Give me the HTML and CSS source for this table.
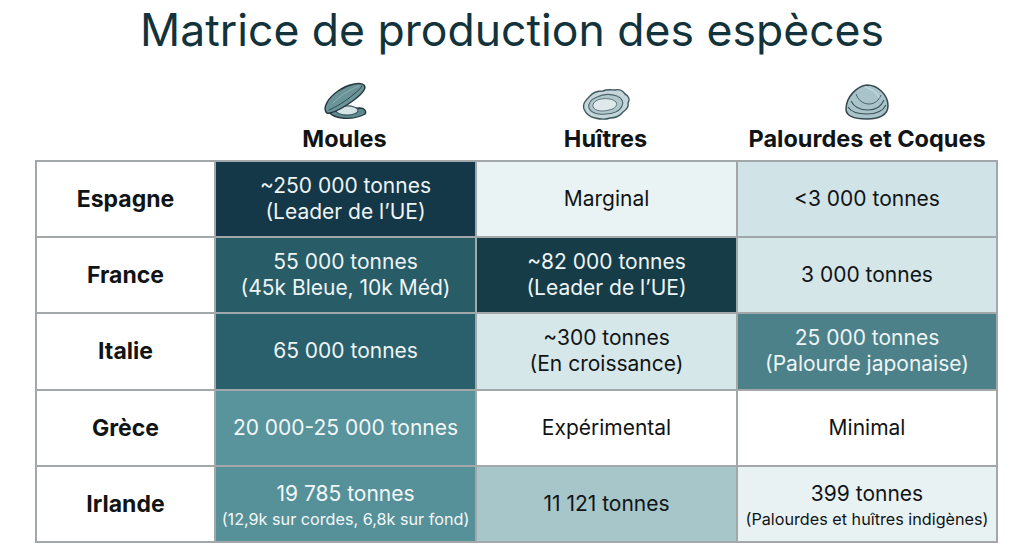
FILE: index.html
```html
<!DOCTYPE html>
<html lang="fr">
<head>
<meta charset="utf-8">
<title>Matrice de production des espèces</title>
<link rel="stylesheet" href="styles.css">
</head>
<body>
<main class="page">
  <h1 class="title">Matrice de production des espèces</h1>
  <section class="matrix">
    <div class="heads">
      <div class="head head-empty"></div>
      <div class="head">
        <svg class="icon" width="46" height="40" viewBox="0 0 46 40" aria-hidden="true">
          <path d="M7 31 C12 38 30 40 43 33 C45 30 42 27 38 27 L12 28 C8 28 6 29 7 31 Z" fill="#5e8a90" stroke="#25393f" stroke-width="1.4" stroke-linejoin="round"/>
          <ellipse cx="25" cy="29.5" rx="11" ry="4.6" fill="#d6e3e6" stroke="#3b565c" stroke-width="1.1"/>
          <path d="M4 31 C1 26 6 17 16 10 C26 3 38 1 42 4 C45 7 40 13 32 19 C24 25 16 30 8 32 C6 32.5 4.6 32 4 31 Z" fill="#6b9499" stroke="#25393f" stroke-width="1.5" stroke-linejoin="round"/>
          <path d="M7 29 C14 26 24 20 32 13 C36 10 39 7 40 5" fill="none" stroke="#2f474d" stroke-width="1" stroke-linecap="round"/>
          <path d="M11 22 C18 15 28 8 37 5" fill="none" stroke="#8fb1b5" stroke-width="1" stroke-linecap="round"/>
        </svg>
        <span class="head-label">Moules</span>
      </div>
      <div class="head">
        <svg class="icon" width="50" height="34" viewBox="0 0 50 34" aria-hidden="true">
          <path d="M3 22 C1 16 6 12 9 9 C12 5 18 4 22 4 C26 2 31 3 34 3 C38 2 42 4 44 7 C48 9 49 13 47 16 C48 20 45 23 42 25 C39 29 34 31 29 31 C24 33 18 32 14 31 C9 30 5 27 3 22 Z" fill="#c5d5d9" stroke="#3f5a60" stroke-width="1.4" stroke-linejoin="round"/>
          <path d="M8 21 C7 16 11 12 16 10 C22 7 30 7 36 9 C41 11 43 15 41 19 C39 24 32 27 25 27 C17 28 10 26 8 21 Z" fill="#b1c7cc" stroke="#4a666c" stroke-width="1.1"/>
          <path d="M12 20 C11 16 15 13 20 12 C26 11 32 12 35 15 C37 18 34 22 28 23 C21 25 14 24 12 20 Z" fill="#dfe9eb" stroke="#5a757a" stroke-width="1"/>
        </svg>
        <span class="head-label">Huîtres</span>
      </div>
      <div class="head">
        <svg class="icon" width="48" height="38" viewBox="0 0 48 38" aria-hidden="true">
          <path d="M3 26 C3 14 14 3 24 2 C34 2 45 11 45 23 C45 32 36 36 24 36 C12 36 3 33 3 26 Z" fill="#a8c3c9" stroke="#35494e" stroke-width="1.5" stroke-linejoin="round"/>
          <path d="M5 24 C8 29 16 31 24 31 C33 31 40 28 43 22" fill="none" stroke="#3b5156" stroke-width="1.1"/>
          <path d="M8 18 C11 24 18 27 25 27 C32 27 38 24 41 17" fill="none" stroke="#3b5156" stroke-width="1.1"/>
          <path d="M13 11 C15 17 20 21 26 21 C32 21 36 17 38 12" fill="none" stroke="#4a6267" stroke-width="1"/>
          <path d="M22 4 C28 6 34 10 36 14" fill="none" stroke="#c9dbdf" stroke-width="1.2" stroke-linecap="round"/>
        </svg>
        <span class="head-label">Palourdes et Coques</span>
      </div>
    </div>
    <div class="grid">
      <div class="cell country"><p class="txt">Espagne</p></div>
      <div class="cell c-navy"><p class="txt">~250 000 tonnes<br>(Leader de l’UE)</p></div>
      <div class="cell c-mist"><p class="txt">Marginal</p></div>
      <div class="cell c-pale"><p class="txt">&lt;3 000 tonnes</p></div>

      <div class="cell country"><p class="txt">France</p></div>
      <div class="cell c-teal"><p class="txt">55 000 tonnes<br>(45k Bleue, 10k Méd)</p></div>
      <div class="cell c-deep"><p class="txt">~82 000 tonnes<br>(Leader de l’UE)</p></div>
      <div class="cell c-pale2"><p class="txt">3 000 tonnes</p></div>

      <div class="cell country"><p class="txt">Italie</p></div>
      <div class="cell c-teal2"><p class="txt">65 000 tonnes</p></div>
      <div class="cell c-pale3"><p class="txt">~300 tonnes<br>(En croissance)</p></div>
      <div class="cell c-sea"><p class="txt">25 000 tonnes<br>(Palourde japonaise)</p></div>

      <div class="cell country"><p class="txt">Grèce</p></div>
      <div class="cell c-aqua"><p class="txt">20 000-25 000 tonnes</p></div>
      <div class="cell c-white"><p class="txt">Expérimental</p></div>
      <div class="cell c-white"><p class="txt">Minimal</p></div>

      <div class="cell country"><p class="txt">Irlande</p></div>
      <div class="cell c-aqua2"><p class="txt txt-note">19 785 tonnes<span class="small">(12,9k sur cordes, 6,8k sur fond)</span></p></div>
      <div class="cell c-sage"><p class="txt">11 121 tonnes</p></div>
      <div class="cell c-mist2"><p class="txt txt-note">399 tonnes<span class="small">(Palourdes et huîtres indigènes)</span></p></div>
    </div>
  </section>
</main>
</body>
</html>
```
FILE: styles.css
```css
* { box-sizing: border-box; }
html, body { margin: 0; padding: 0; background: #ffffff; }
body {
  font-family: Inter, "Noto Sans", "Liberation Sans", sans-serif;
  color: #111416;
  width: 1024px;
  height: 554px;
  overflow: hidden;
}
.page { padding-top: 4px; }
.title {
  margin: 0;
  text-align: center;
  font-size: 44.5px;
  line-height: 52px;
  font-weight: 400;
  color: #12323c;
}
.matrix {
  width: 963px;
  margin-left: 35px;
}
.heads {
  display: grid;
  grid-template-columns: 179px 261px 261px 262px;
  height: 104px;
}
.head {
  display: flex;
  flex-direction: column;
  align-items: center;
  justify-content: flex-end;
  padding-bottom: 8px;
  gap: 5px;
}
.head-label {
  font-size: 23.5px;
  line-height: 26px;
  font-weight: 700;
  color: #111416;
}
.grid {
  display: grid;
  grid-template-columns: 177px 259px 259px 258px;
  grid-template-rows: repeat(5, 1fr);
  gap: 2px;
  padding: 2px;
  height: 383px;
  background: #a2a7a9;
}
.cell {
  display: flex;
  align-items: center;
  justify-content: center;
  text-align: center;
  font-size: 21px;
  line-height: 26px;
  background: #ffffff;
  color: #111416;
}
.txt { margin: 0; }
.txt-note { padding-top: 4px; }
.country {
  font-size: 23px;
  font-weight: 700;
}
.small { display: block; font-size: 16.2px; line-height: 24px; }
.c-navy { background: #153848; color: #eef4f5; }
.c-deep { background: #163d47; color: #eef4f5; }
.c-teal { background: #285c67; color: #eef4f5; }
.c-teal2 { background: #2a606b; color: #eef4f5; }
.c-sea { background: #4c8189; color: #eef4f5; }
.c-aqua { background: #59939b; color: #f2f7f7; }
.c-aqua2 { background: #56919a; color: #f2f7f7; }
.c-sage { background: #a6c6ca; }
.c-mist { background: #eaf3f4; }
.c-mist2 { background: #e8f2f3; }
.c-pale { background: #d0e3e6; }
.c-pale2 { background: #d4e6e8; }
.c-pale3 { background: #d6e7ea; }
.c-white { background: #ffffff; }
```
